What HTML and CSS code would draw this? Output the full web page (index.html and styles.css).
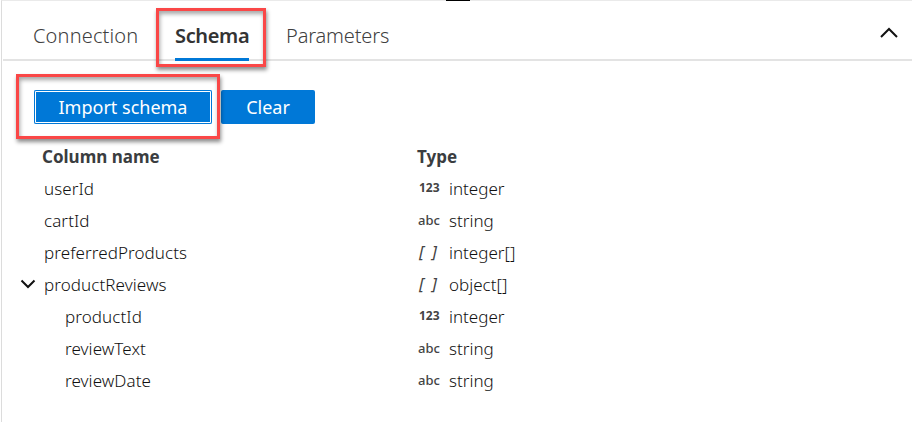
FILE: index.html
```
<!DOCTYPE html>
<html lang="en">
<head>
<meta charset="utf-8">
<title>Schema</title>
<link rel="stylesheet" href="styles.css">
</head>
<body>
<main class="panel">
  <span class="handle"></span>
  <nav class="tabs">
    <a class="tab connection"><span>Connection</span></a>
    <a class="tab active"><span>Schema</span></a>
    <a class="tab parameters"><span>Parameters</span></a>
    <svg class="collapse" width="18" height="12" viewBox="0 0 18 12"><path d="M1 10 9 2 17 10"/></svg>
  </nav>
  <div class="toolbar">
    <button class="btn import"><span>Import schema</span></button>
    <button class="btn clear"><span>Clear</span></button>
  </div>
  <section class="grid">
    <div class="row head"><div class="name"><span>Column name</span></div><div class="type"><span>Type</span></div></div>
    <div class="row"><div class="name"><span>userId</span></div><div class="type"><i class="num">123</i><span>integer</span></div></div>
    <div class="row"><div class="name"><span>cartId</span></div><div class="type"><i class="abc">abc</i><span>string</span></div></div>
    <div class="row"><div class="name"><span>preferredProducts</span></div><div class="type"><i class="arr">[ ]</i><span>integer[]</span></div></div>
    <div class="row"><div class="name"><svg class="chevron" width="16" height="10" viewBox="0 0 16 10"><path d="M1.500 1.500 8 8l6.500-6.500"/></svg><span>productReviews</span></div><div class="type"><i class="arr">[ ]</i><span>object[]</span></div></div>
    <div class="row child"><div class="name"><span>productId</span></div><div class="type"><i class="num">123</i><span>integer</span></div></div>
    <div class="row child"><div class="name"><span>reviewText</span></div><div class="type"><i class="abc">abc</i><span>string</span></div></div>
    <div class="row child"><div class="name"><span>reviewDate</span></div><div class="type"><i class="abc">abc</i><span>string</span></div></div>
  </section>
  <div class="callout callout-tab"></div>
  <div class="callout callout-import"></div>
</main>
</body>
</html>
```
FILE: styles.css
```
* { box-sizing: border-box; }
body { margin: 0; background: #fff; font-family: "Noto Sans", "Open Sans", sans-serif; color: #111; overflow: hidden; }
.panel { position: relative; height: 422px; margin-left: 1px; border-left: 1px solid #dcdcdc; border-top: 1px solid #eaeaea; }
.handle { position: absolute; left: 444px; top: -1px; width: 24px; height: 1px; background: #000; }
.tabs { display: flex; height: 60px; margin-left: 1px; padding-left: 30px; border-bottom: 2px solid #e3e3e3; }
.tab { height: 60px; margin-right: 36px; font-size: 20px; line-height: 69px; color: #404040; font-weight: 350; white-space: nowrap; }
.connection { width: 106px; letter-spacing: .15px; }
.parameters { letter-spacing: -.15px; padding-left: 1px; }
.active { width: 74px; border-bottom: 3px solid #0078d7; color: #333; font-weight: 600; letter-spacing: -.35px; }
.collapse { margin: 26px 14px 0 auto; }
svg path { fill: none; stroke: #111; stroke-width: 2; }
.toolbar { display: flex; gap: 9px; padding: 29px 0 0 32px; }
.btn { height: 34px; padding: 0; border: 0; border-radius: 2px; background: #0078d7; color: #fff; font: 18px/35px "Noto Sans", "Open Sans", sans-serif; white-space: nowrap; }
.btn span { display: block; }
.import { width: 178px; box-shadow: inset 0 0 0 1px #0078d7, inset 0 0 0 2px #fff; }
.clear { width: 94px; }
.grid { padding-top: 17px; }
.row { display: flex; height: 32px; font-size: 17px; line-height: 32px; font-weight: 350; }
.name { position: relative; width: 415px; padding-left: 42px; letter-spacing: .08px; }
.child .name { padding-left: 63px; }
.type { display: flex; }
.head { font-weight: 700; color: #3a3d40; }
.head .name { padding-left: 40px; letter-spacing: 0; }
.type i { width: 32px; padding-left: 2px; font-style: normal; color: #444; font-size: 13px; line-height: 30px; }
.type .num { font-weight: 700; font-size: 12px; }
.type .abc { font-weight: 500; padding-left: 1px; }
.type .arr { font-style: italic; font-size: 17px; font-weight: 400; word-spacing: 3px; letter-spacing: .3px; }
.chevron { position: absolute; left: 18px; top: 10px; }
.callout { position: absolute; border: 3px solid #fa4747; box-shadow: 1px 3px 4px rgba(0,0,0,.45), inset 1px 3px 4px rgba(0,0,0,.35); pointer-events: none; }
.callout-tab { left: 154px; top: 7px; width: 110px; height: 59px; }
.callout-import { left: 14px; top: 73px; width: 204px; height: 65px; }
```
